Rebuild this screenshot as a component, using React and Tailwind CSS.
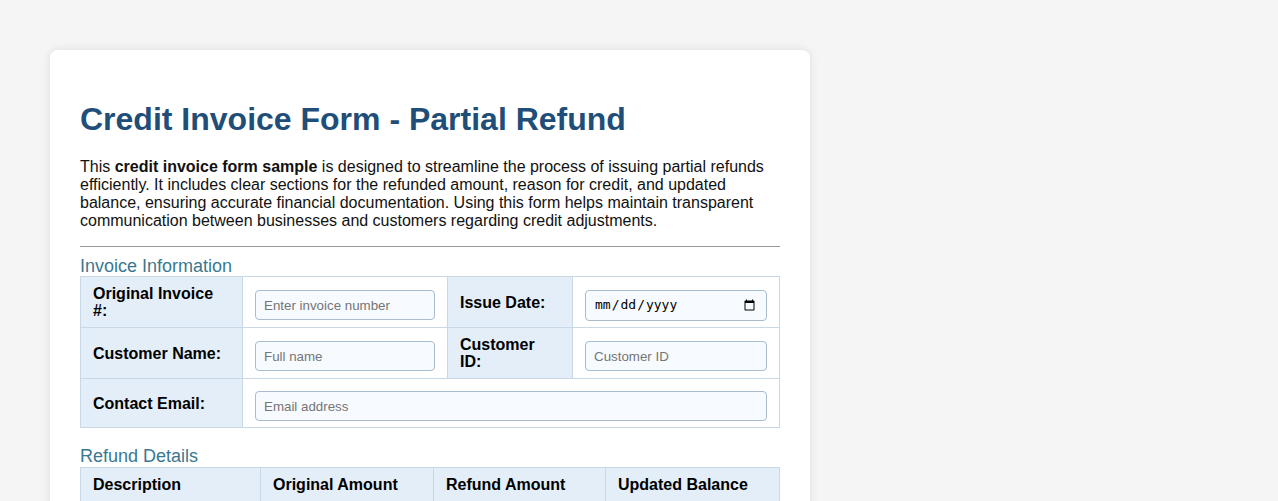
import React from 'react';

const labelCell = 'border border-[#c9d8e6] bg-[#e3eef9] px-3 py-2 align-middle text-left font-bold leading-[17px] text-black';
const inputCell = 'border border-[#c9d8e6] bg-white px-3 pt-[12px] pb-[6px] align-middle';
const bodyCell = 'border border-[#c9d8e6] bg-white px-3 py-2 align-middle';
const inputCls = 'block w-full h-[30px] rounded-[4px] border border-[#a9bccd] bg-[#f7fbff] px-2 text-[13.33px] text-black placeholder:text-[#757575] outline-none';

const refundRows = [
  { desc: 'Consulting services', original: '$1,200.00', refund: '$300.00', balance: '$900.00' },
  { desc: 'Software license', original: '$800.00', refund: '$200.00', balance: '$600.00' },
];

export default function App() {
  return (
    <div className="min-h-screen bg-[#f5f5f5] p-[50px]" style={{ fontFamily: '"Liberation Sans", Arial, sans-serif' }}>
      <div className="w-[760px] rounded-lg bg-white p-[30px] shadow-[0_0_10px_rgba(0,0,0,0.1)]">
        <h1 className="mt-[21px] mb-[20px] text-[32px] font-bold leading-[37px] text-[#1f4e79]">
          Credit Invoice Form - Partial Refund
        </h1>
        <p className="text-[16px] leading-[18px] text-[#111]">
          This <strong>credit invoice form sample</strong> is designed to streamline the process of issuing partial refunds
          efficiently. It includes clear sections for the refunded amount, reason for credit, and updated
          balance, ensuring accurate financial documentation. Using this form helps maintain transparent
          communication between businesses and customers regarding credit adjustments.
        </p>
        <hr className="mt-[16px] border-0 border-t border-[#9a9a9a]" />

        <h2 className="mt-[9px] mb-0 text-[18px] leading-[20px] text-[#3a7891]">Invoice Information</h2>
        <table className="w-full table-fixed border-collapse text-[16px]">
          <colgroup>
            <col className="w-[162px]" />
            <col className="w-[205px]" />
            <col className="w-[125px]" />
            <col />
          </colgroup>
          <tbody>
            <tr className="h-[51px]">
              <th className={labelCell}>Original Invoice<br />#:</th>
              <td className={inputCell}>
                <input type="text" placeholder="Enter invoice number" className={inputCls} />
              </td>
              <th className={labelCell}>Issue Date:</th>
              <td className={inputCell}>
                <input
                  type="date"
                  className="block w-full h-[31px] rounded-[4px] border border-[#a9bccd] bg-[#f7fbff] px-2 text-[13px] text-black outline-none"
                  style={{ fontFamily: '"DejaVu Sans Mono", monospace' }}
                />
              </td>
            </tr>
            <tr className="h-[51px]">
              <th className={labelCell}>Customer Name:</th>
              <td className={inputCell}>
                <input type="text" placeholder="Full name" className={inputCls} />
              </td>
              <th className={labelCell}>Customer<br />ID:</th>
              <td className={inputCell}>
                <input type="text" placeholder="Customer ID" className={inputCls} />
              </td>
            </tr>
            <tr className="h-[48px]">
              <th className={labelCell}>Contact Email:</th>
              <td className={inputCell} colSpan={3}>
                <input type="email" placeholder="Email address" className={inputCls} />
              </td>
            </tr>
          </tbody>
        </table>

        <h2 className="mt-[18px] mb-0 text-[18px] leading-[21px] text-[#3a7891]">Refund Details</h2>
        <table className="w-full table-fixed border-collapse text-[16px]">
          <colgroup>
            <col className="w-[180px]" />
            <col className="w-[173px]" />
            <col className="w-[172px]" />
            <col />
          </colgroup>
          <thead>
            <tr className="h-[34px]">
              <th className={labelCell}>Description</th>
              <th className={labelCell}>Original Amount</th>
              <th className={labelCell}>Refund Amount</th>
              <th className={labelCell}>Updated Balance</th>
            </tr>
          </thead>
          <tbody>
            {refundRows.map((r) => (
              <tr key={r.desc}>
                <td className={bodyCell}>{r.desc}</td>
                <td className={bodyCell}>{r.original}</td>
                <td className={bodyCell}>{r.refund}</td>
                <td className={bodyCell}>{r.balance}</td>
              </tr>
            ))}
          </tbody>
        </table>
      </div>
    </div>
  );
}
